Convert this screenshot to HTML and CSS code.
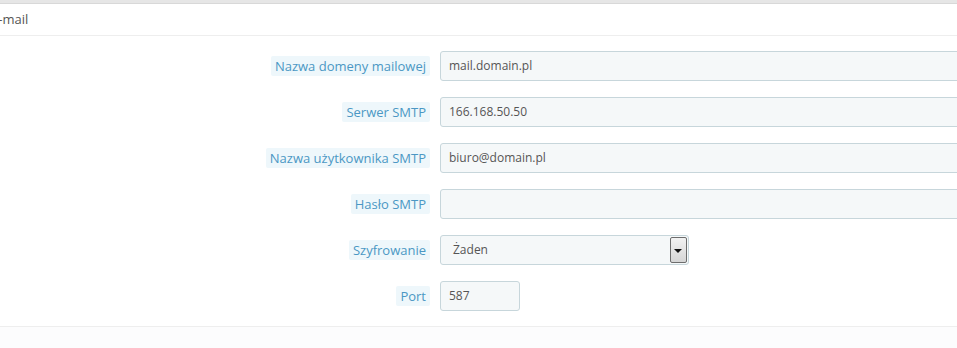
FILE: index.html
```html
<!DOCTYPE html>
<html lang="pl">
<head>
  <meta charset="UTF-8" />
  <title>E-mail</title>
  <link rel="stylesheet" href="styles.css">
</head>
<body>

  <div class="panel">
    <div class="panel-heading">E-mail</div>

    <div class="form-body">
      <div class="form-row">
        <label class="control-label"><span>Nazwa domeny mailowej</span></label>
        <div class="field wide">mail.domain.pl</div>
      </div>
      <div class="form-row">
        <label class="control-label"><span>Serwer SMTP</span></label>
        <div class="field wide">166.168.50.50</div>
      </div>
      <div class="form-row">
        <label class="control-label"><span>Nazwa użytkownika SMTP</span></label>
        <div class="field wide">biuro@domain.pl</div>
      </div>
      <div class="form-row">
        <label class="control-label"><span>Hasło SMTP</span></label>
        <div class="field wide"></div>
      </div>
      <div class="form-row">
        <label class="control-label"><span>Szyfrowanie</span></label>
        <div class="field select">
          <span class="select-value">Żaden</span>
          <span class="select-arrow"></span>
        </div>
      </div>
      <div class="form-row">
        <label class="control-label"><span>Port</span></label>
        <div class="field small">587</div>
      </div>
    </div>

    <div class="panel-footer"></div>
  </div>

</body>
</html>
```

FILE: styles.css
```css
:root {
  --label-color: #4b97c4;
  --label-bg: #eef7fb;
  --input-bg: #f5f8f9;
  --input-border: #c7d6db;
  --text-color: #555;
}

body {
  margin: 0;
  background: #fff;
  font-family: 'Open Sans', 'Liberation Sans', sans-serif;
  font-size: 13px;
  color: var(--text-color);
  overflow: hidden;
}

.panel {
  border-top: 3px solid #e6e6e6;
}

.panel-heading {
  border-top: 1px solid #d8d8d8;
  border-bottom: 1px solid #eee;
  height: 31px;
  line-height: 30px;
  font-size: 13px;
  color: #555;
  text-indent: -9px;
  white-space: nowrap;
  overflow: hidden;
}

.form-body {
  padding: 15px 0 15px;
  display: flex;
  flex-direction: column;
  gap: 16px;
}

.form-row {
  display: grid;
  grid-template-columns: 430px 1fr;
  gap: 10px;
  align-items: center;
  height: 30px;
}

.control-label {
  text-align: right;
  font-size: 13px;
  color: var(--label-color);
}

.control-label span {
  display: inline-block;
  background: var(--label-bg);
  padding: 0 4px;
  height: 20px;
  line-height: 20px;
  border-radius: 2px;
}

.field {
  box-sizing: border-box;
  height: 30px;
  line-height: 28px;
  padding: 0 8px;
  font-size: 12px;
  background: var(--input-bg);
  border: 1px solid var(--input-border);
  border-radius: 3px;
  white-space: nowrap;
}

.field.wide {
  width: 580px;
}

.field.small {
  width: 80px;
}

.field.select {
  width: 249px;
  display: flex;
  align-items: stretch;
  justify-content: space-between;
  padding: 0 0 0 12px;
}

.select-arrow {
  box-sizing: border-box;
  width: 17px;
  margin: 1px;
  border: 1px solid #6d6d6d;
  border-radius: 2px;
  background: linear-gradient(#f2f2f2, #d5d5d5);
  position: relative;
}

.select-arrow::after {
  content: "";
  position: absolute;
  left: 3px;
  top: 11px;
  border-left: 4px solid transparent;
  border-right: 4px solid transparent;
  border-top: 4px solid #111;
}

.panel-footer {
  border-top: 1px solid #eee;
  background: #fcfcfd;
  height: 30px;
}
```
